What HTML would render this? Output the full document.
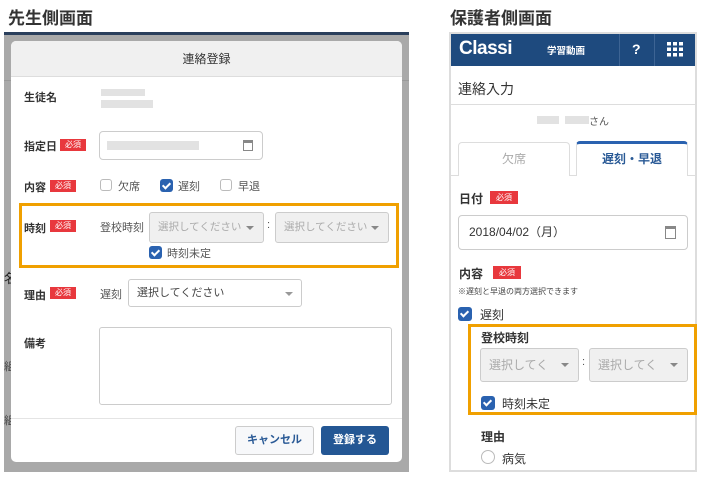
<!DOCTYPE html>
<html><head><meta charset="utf-8">
<style>
*{box-sizing:border-box;margin:0;padding:0}
body{width:703px;height:478px;background:#fff;position:relative;overflow:hidden;font-family:"Liberation Sans","Noto Sans CJK JP",sans-serif;color:#333}
.a{position:absolute}
.t{font-size:11px;white-space:nowrap}
.b{font-weight:bold}
.badge{position:absolute;background:#e8383d;color:#fff;font-size:8px;line-height:12px;height:12px;padding:0 5px}
.cb{position:absolute;width:12px;height:12px;border:1px solid #bbb;border-radius:3px;background:#fff}
.cbo{position:absolute;width:13px;height:13px;border-radius:3px;background:#2a62b0}
.cbo:after{content:"";position:absolute;left:4px;top:1.5px;width:3px;height:6px;border:solid #fff;border-width:0 2px 2px 0;transform:rotate(45deg)}
.sel{position:absolute;border:1px solid #ccc;border-radius:3px;background:#f0f0f0;color:#aaa;font-size:11px;padding-left:8px;white-space:nowrap;overflow:hidden}
.sel:after{content:"";position:absolute;right:9px;top:50%;margin-top:-2px;border:4px solid transparent;border-top:4px solid #888;border-bottom:0}
.blur{position:absolute;background:#e2e2e2}
</style></head><body>
<div class="a b" style="left:8px;top:4px;font-size:17px;color:#333">先生側画面</div>
<div class="a b" style="left:450px;top:4px;font-size:17px;color:#333">保護者側画面</div>

<div class="a" style="left:4px;top:32px;width:405px;height:440px;background:#a9a9a9"></div>
<div class="a" style="left:4px;top:32px;width:405px;height:3px;background:#2a3f5c"></div>
<div class="a" style="left:4px;top:80px;width:405px;height:1px;background:#999"></div>
<div class="a t" style="left:4px;top:268px;font-size:13px;color:#222">名</div>
<div class="a t" style="left:4px;top:358px;color:#444">組</div>
<div class="a t" style="left:4px;top:412px;color:#444">組</div>
<div class="a" style="left:11px;top:41px;width:391px;height:421px;background:#fff;border-radius:5px;overflow:hidden">
  <div class="a" style="left:0;top:0;width:391px;height:36px;background:#f0f0f0;border-bottom:1px solid #ddd;text-align:center;line-height:36px;font-size:12px;color:#333">連絡登録</div>
  <div class="a" style="left:0;top:377px;width:391px;height:1px;background:#e4e4e4"></div>
</div>
<div class="a t b" style="left:24px;top:89px">生徒名</div>
<div class="blur" style="left:101px;top:89px;width:44px;height:7px"></div>
<div class="blur" style="left:101px;top:100px;width:52px;height:8px"></div>

<div class="a t b" style="left:24px;top:138px">指定日</div>
<div class="badge" style="left:60px;top:139px">必須</div>
<div class="a" style="left:99px;top:131px;width:164px;height:29px;border:1px solid #ccc;border-radius:4px"></div>
<div class="blur" style="left:107px;top:141px;width:92px;height:9px"></div>
<div class="a" style="left:243px;top:140px;width:10px;height:11px;border:1px solid #888;border-top-width:3px"></div>

<div class="a t b" style="left:24px;top:179px">内容</div>
<div class="badge" style="left:50px;top:180px">必須</div>
<div class="cb" style="left:100px;top:179px"></div><div class="a t" style="left:118px;top:178px;color:#555">欠席</div>
<div class="cbo" style="left:160px;top:179px"></div><div class="a t" style="left:178px;top:178px;color:#555">遅刻</div>
<div class="cb" style="left:220px;top:179px"></div><div class="a t" style="left:238px;top:178px;color:#555">早退</div>

<div class="a" style="left:19px;top:203px;width:380px;height:65px;border:3px solid #f0a000"></div>
<div class="a t b" style="left:24px;top:220px">時刻</div>
<div class="badge" style="left:50px;top:220px">必須</div>
<div class="a t" style="left:100px;top:219px;color:#555">登校時刻</div>
<div class="sel" style="left:149px;top:212px;width:115px;height:31px;line-height:29px;font-size:10.5px">選択してください</div>
<div class="a t" style="left:267px;top:219px;color:#555">:</div>
<div class="sel" style="left:275px;top:212px;width:114px;height:31px;line-height:29px;font-size:10.5px">選択してください</div>
<div class="cbo" style="left:149px;top:246px"></div><div class="a t" style="left:167px;top:245px;color:#555">時刻未定</div>

<div class="a t b" style="left:24px;top:287px">理由</div>
<div class="badge" style="left:50px;top:287px">必須</div>
<div class="a t" style="left:100px;top:286px;color:#555">遅刻</div>
<div class="a" style="left:128px;top:279px;width:174px;height:28px;border:1px solid #ccc;border-radius:3px;font-size:11px;line-height:26px;padding-left:8px;color:#444">選択してください<span style="position:absolute;right:8px;top:12px;border:4px solid transparent;border-top:4px solid #999;border-bottom:0"></span></div>

<div class="a t b" style="left:24px;top:335px">備考</div>
<div class="a" style="left:99px;top:327px;width:293px;height:78px;border:1px solid #ccc;border-radius:3px"></div>

<div class="a b" style="left:235px;top:426px;width:79px;height:29px;border:1px solid #ccc;border-radius:3px;background:#f7f8fa;color:#2a5a96;font-size:11px;text-align:center;line-height:27px">キャンセル</div>
<div class="a b" style="left:321px;top:426px;width:68px;height:29px;border-radius:3px;background:#245794;color:#fff;font-size:11px;text-align:center;line-height:29px">登録する</div>

<div class="a" style="left:449px;top:32px;width:248px;height:440px;border:2px solid #ddd"></div>
<div class="a" style="left:451px;top:34px;width:244px;height:32px;background:#1e4a7e"></div>
<div class="a b" style="left:459px;top:38px;font-size:19px;color:#fff;letter-spacing:-0.5px;font-family:'Liberation Sans',sans-serif">Classi</div>
<div class="a b" style="left:547px;top:43px;font-size:9.5px;color:#fff">学習動画</div>
<div class="a" style="left:619px;top:34px;width:1px;height:32px;background:#3d6494"></div>
<div class="a" style="left:654px;top:34px;width:1px;height:32px;background:#3d6494"></div>
<div class="a b" style="left:632px;top:41px;font-size:14px;color:#fff">?</div>
<svg class="a" style="left:667px;top:42px" width="18" height="15"><g fill="#fff"><rect x="0" y="0" width="4" height="3.5"/><rect x="6" y="0" width="4" height="3.5"/><rect x="12" y="0" width="4" height="3.5"/><rect x="0" y="5.5" width="4" height="3.5"/><rect x="6" y="5.5" width="4" height="3.5"/><rect x="12" y="5.5" width="4" height="3.5"/><rect x="0" y="11" width="4" height="3.5"/><rect x="6" y="11" width="4" height="3.5"/><rect x="12" y="11" width="4" height="3.5"/></g></svg>
<div class="a" style="left:458px;top:79px;font-size:14px;color:#333">連絡入力</div>
<div class="a" style="left:450px;top:104px;width:246px;height:1px;background:#ddd"></div>
<div class="blur" style="left:537px;top:116px;width:22px;height:8px"></div>
<div class="blur" style="left:565px;top:116px;width:24px;height:8px"></div>
<div class="a" style="left:589px;top:113px;font-size:10px;color:#555">さん</div>
<div class="a" style="left:458px;top:142px;width:112px;height:34px;border:1px solid #ddd;border-bottom:none;border-radius:4px 4px 0 0;text-align:center;line-height:32px;font-size:12px;color:#aaa">欠席</div>
<div class="a" style="left:576px;top:141px;width:112px;height:35px;border:1px solid #ddd;border-top:3px solid #2a62b0;border-bottom:none;border-radius:4px 4px 0 0;text-align:center;line-height:30px;font-size:12px;color:#2a5a96;font-weight:bold;background:#fff">遅刻・早退</div>
<div class="a" style="left:450px;top:175px;width:8px;height:1px;background:#ddd"></div>
<div class="a" style="left:570px;top:175px;width:6px;height:1px;background:#ddd"></div>
<div class="a" style="left:688px;top:175px;width:8px;height:1px;background:#ddd"></div>
<div class="a t" style="left:459px;top:190px;font-size:12px;font-weight:bold;color:#333">日付</div>
<div class="badge" style="left:490px;top:191px;height:13px;line-height:13px;padding:0 6px">必須</div>
<div class="a" style="left:458px;top:215px;width:230px;height:35px;border:1px solid #ccc;border-radius:4px;font-size:12px;line-height:33px;padding-left:10px;color:#333">2018/04/02（月）</div>
<div class="a" style="left:665px;top:226px;width:11px;height:13px;border:1px solid #888;border-top-width:3px"></div>
<div class="a t" style="left:459px;top:265px;font-size:12px;font-weight:bold">内容</div>
<div class="badge" style="left:493px;top:266px;height:13px;line-height:13px;padding:0 6px">必須</div>
<div class="a" style="left:458px;top:286px;font-size:8px;color:#444">※遅刻と早退の両方選択できます</div>
<div class="cbo" style="left:458px;top:307px;width:14px;height:14px"></div>
<div class="a t" style="left:480px;top:306px;font-size:12px">遅刻</div>
<div class="a" style="left:468px;top:324px;width:229px;height:91px;border:3px solid #f0a000"></div>
<div class="a b" style="left:481px;top:329px;font-size:12px">登校時刻</div>
<div class="sel" style="left:480px;top:348px;width:99px;height:34px;line-height:32px;font-size:12px">選択してく</div>
<div class="a t" style="left:582px;top:356px;color:#555">:</div>
<div class="sel" style="left:589px;top:348px;width:99px;height:34px;line-height:32px;font-size:12px">選択してく</div>
<div class="cbo" style="left:481px;top:396px;width:14px;height:14px"></div>
<div class="a t" style="left:502px;top:395px;font-size:12px">時刻未定</div>
<div class="a b" style="left:481px;top:428px;font-size:12px">理由</div>
<div class="a" style="left:481px;top:450px;width:14px;height:14px;border:1px solid #bbb;border-radius:50%"></div>
<div class="a t" style="left:502px;top:450px;font-size:12px">病気</div>
</body></html>
